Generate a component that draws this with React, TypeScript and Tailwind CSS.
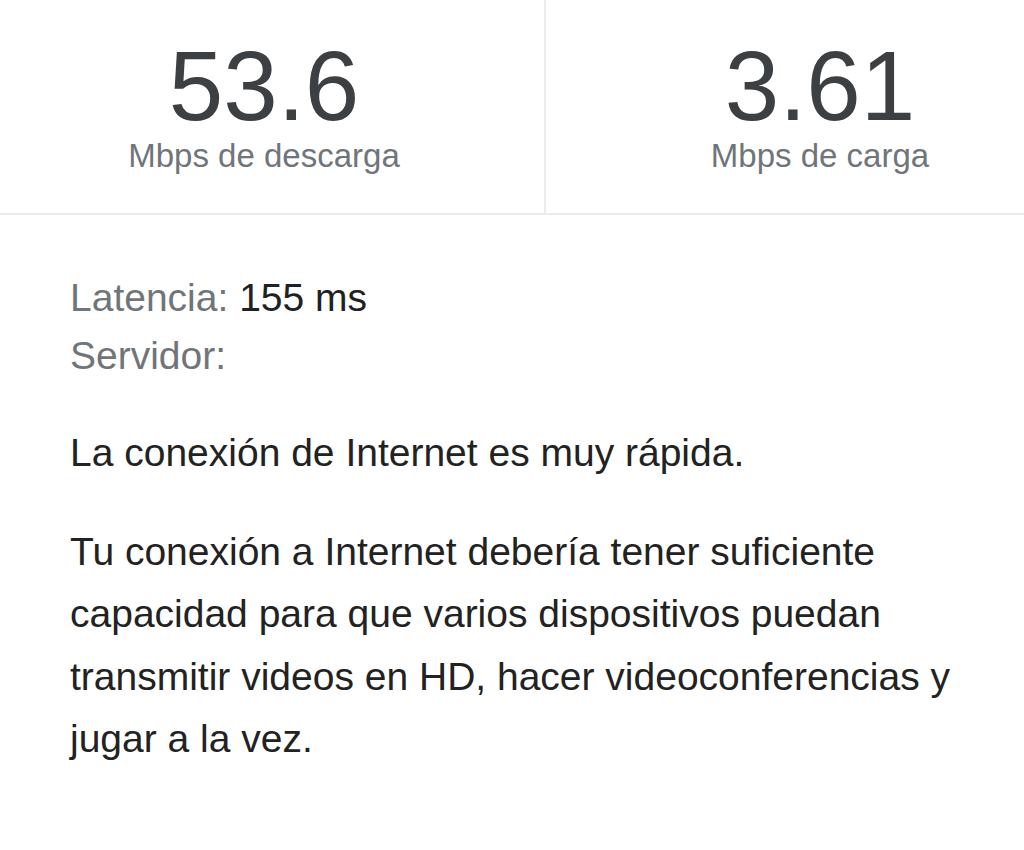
export default function App() {
  return (
    <div className="min-h-screen bg-white font-['Liberation_Sans',Arial,sans-serif]">
      <div className="flex border-b-2 border-[#ebebeb]">
        <div className="w-[546px] border-r-2 border-[#ebebeb] pr-[16px] pt-[34px] pb-[42px] flex flex-col items-center">
          <div className="text-[98px] leading-[104px] text-[#3c4043]">53.6</div>
          <div className="mt-[3px] text-[33px] leading-[30px] text-[#70757a]">Mbps de descarga</div>
        </div>
        <div className="flex-1 pl-[70px] pt-[34px] pb-[42px] flex flex-col items-center">
          <div className="text-[98px] leading-[104px] text-[#3c4043]">3.61</div>
          <div className="mt-[3px] text-[33px] leading-[30px] text-[#70757a]">Mbps de carga</div>
        </div>
      </div>
      <div className="pl-[70px] pt-[54px] text-[39px]">
        <div className="leading-[58px]">
          <div>
            <span className="text-[#70757a]">Latencia:</span>{" "}
            <span className="text-[#202124]">155 ms</span>
          </div>
          <div className="text-[#70757a]">Servidor:</div>
        </div>
        <p className="mt-[37px] leading-[62.5px] text-[#222222]">La conexión de Internet es muy rápida.</p>
        <p className="mt-[36px] w-[890px] leading-[62.5px] text-[#222222]">
          Tu conexión a Internet debería tener suficiente capacidad para que varios dispositivos puedan transmitir
          videos en HD, hacer videoconferencias y jugar a la vez.
        </p>
      </div>
    </div>
  )
}
